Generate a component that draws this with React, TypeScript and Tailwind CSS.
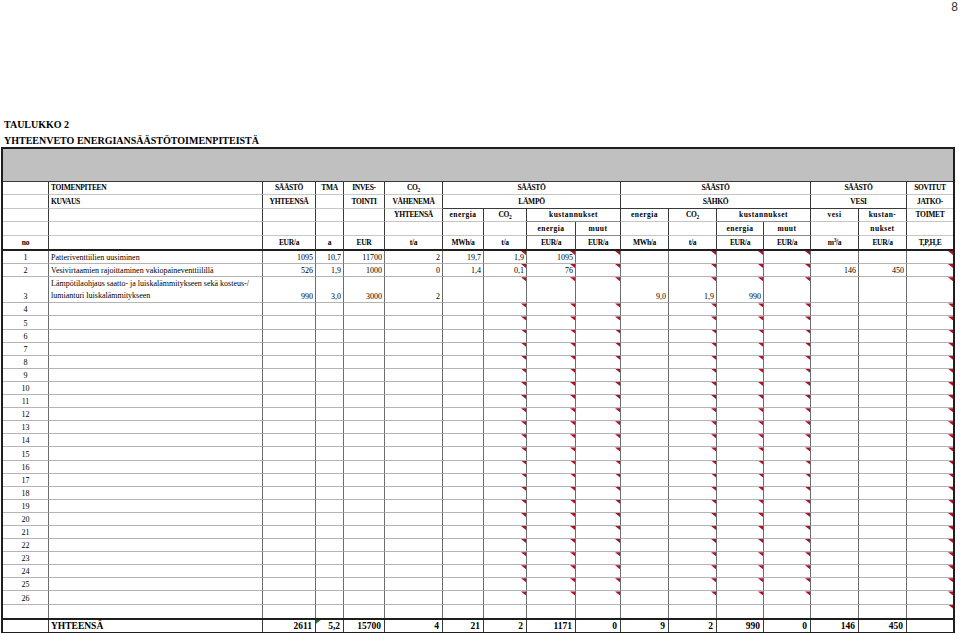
import type { ReactNode } from "react";

// 17 spreadsheet columns: no, kuvaus, säästö, tma, investointi, co2, lämpö x4, sähkö x4, vesi x2, sovitut
const COLS =
  "grid grid-cols-[46px_214px_53px_28px_41px_58px_41px_43px_49px_45px_48px_48px_47px_47px_48px_48px_46px]";

// columns that carry the red comment corner in every body row
const MARK = new Set([7, 8, 9, 11, 12, 13, 16]);

type HCell = {
  t?: ReactNode;
  span?: 2 | 4;
  r?: "d" | "n";
  b?: "l" | "d" | "m" | "x";
  left?: boolean;
  low?: boolean;
};

const co2 = (
  <span>
    CO<span className="text-[5.5px] relative top-[1.5px]">2</span>
  </span>
);

const m3 = (
  <span>
    m<span className="text-[5.5px] relative -top-[2.5px]">3</span>/a
  </span>
);

const rBorder = { d: "border-r border-r-[#3a3a3a]", n: "" };
const bBorder = {
  l: "border-b border-b-[#c6c6c6]",
  d: "border-b border-b-[#3a3a3a]",
  m: "border-b border-b-[#8a8a8a]",
  x: "border-b-2 border-b-[#1e1e1e]",
};

const e = (n: number, b: HCell["b"] = "l"): HCell[] => Array.from({ length: n }, () => ({ b }));

const header: HCell[] = [
  // row 1
  {},
  { t: "TOIMENPITEEN", left: true },
  { t: "SÄÄSTÖ" },
  { t: "TMA" },
  { t: "INVES-" },
  { t: co2 },
  { t: "SÄÄSTÖ", span: 4 },
  { t: "SÄÄSTÖ", span: 4 },
  { t: "SÄÄSTÖ", span: 2 },
  { t: "SOVITUT", r: "n" },
  // row 2
  {},
  { t: "KUVAUS", left: true },
  { t: "YHTEENSÄ" },
  {},
  { t: "TOINTI" },
  { t: "VÄHENEMÄ" },
  { t: "LÄMPÖ", span: 4, b: "d" },
  { t: "SÄHKÖ", span: 4, b: "d" },
  { t: "VESI", span: 2, b: "d" },
  { t: "JATKO-", r: "n" },
  // row 3
  ...e(5),
  { t: "YHTEENSÄ" },
  { t: "energia", low: true },
  { t: co2 },
  { t: "kustannukset", span: 2, b: "m", low: true },
  { t: "energia", low: true },
  { t: co2 },
  { t: "kustannukset", span: 2, b: "m", low: true },
  { t: "vesi", low: true },
  { t: "kustan-", low: true },
  { t: "TOIMET", r: "n" },
  // row 4
  ...e(8),
  { t: "energia", b: "m", low: true },
  { t: "muut", b: "m", low: true },
  ...e(2),
  { t: "energia", b: "m", low: true },
  { t: "muut", b: "m", low: true },
  {},
  { t: "nukset", low: true },
  { r: "n" },
  // row 5
  ...[
    "no",
    "",
    "EUR/a",
    "a",
    "EUR",
    "t/a",
    "MWh/a",
    "t/a",
    "EUR/a",
    "EUR/a",
    "MWh/a",
    "t/a",
    "EUR/a",
    "EUR/a",
  ].map((t): HCell => ({ t, b: "x" })),
  { t: m3, b: "x" },
  { t: "EUR/a", b: "x" },
  { t: "T,P,H,E", b: "x", r: "n" },
];

type Row = { no: string; text?: string[]; vals?: Record<number, string>; tall?: boolean };

const rows: Row[] = [
  {
    no: "1",
    text: ["Patteriventtiilien uusiminen"],
    vals: { 2: "1095", 3: "10,7", 4: "11700", 5: "2", 6: "19,7", 7: "1,9", 8: "1095" },
  },
  {
    no: "2",
    text: ["Vesivirtaamien rajoittaminen vakiopaineventtiilillä"],
    vals: { 2: "526", 3: "1,9", 4: "1000", 5: "0", 6: "1,4", 7: "0,1", 8: "76", 14: "146", 15: "450" },
  },
  {
    no: "3",
    tall: true,
    text: ["Lämpötilaohjaus saatto- ja luiskalämmitykseen sekä kosteus-/", "lumianturi luiskalämmitykseen"],
    vals: { 2: "990", 3: "3,0", 4: "3000", 5: "2", 10: "9,0", 11: "1,9", 12: "990" },
  },
  ...Array.from({ length: 23 }, (_, i) => ({ no: String(i + 4) })),
];

const totals = ["", "YHTEENSÄ", "2611", "5,2", "15700", "4", "21", "2", "1171", "0", "9", "2", "990", "0", "146", "450", ""];

function Corner({ green }: { green?: boolean }) {
  return green ? (
    <span className="absolute left-0 top-0 w-[5px] h-[4px] bg-[#1f7a2e] [clip-path:polygon(0_0,100%_0,0_100%)]" />
  ) : (
    <span className="absolute right-0 top-0 w-[5px] h-[4px] bg-[#b01028] [clip-path:polygon(0_0,100%_0,100%_100%)]" />
  );
}

function BodyRow({ row }: { row: Row }) {
  return (
    <div className={`${COLS} ${row.tall ? "h-[26.2px]" : "h-[13.1px]"}`}>
      {Array.from({ length: 17 }, (_, i) => {
        const align = i === 0 ? "justify-center" : i === 1 ? "justify-start pl-[2px]" : "justify-end pr-[2px]";
        const content = i === 0 ? row.no : i === 1 ? row.text : row.vals?.[i];
        return (
          <div
            key={i}
            className={`relative flex items-end ${align} border-b border-b-[#b4b4b4] ${
              i < 16 ? "border-r border-r-[#6c6c6c]" : ""
            } text-[8px] leading-[11px] whitespace-nowrap overflow-visible`}
          >
            {MARK.has(i) && <Corner />}
            {Array.isArray(content) ? (
              <div className={row.tall ? "leading-[12px]" : ""}>
                {content.map((l) => (
                  <div key={l}>{l}</div>
                ))}
              </div>
            ) : (
              content
            )}
          </div>
        );
      })}
    </div>
  );
}

export default function App() {
  return (
    <div className="w-[960px] h-[633px] bg-white text-black overflow-hidden font-['Liberation_Serif','Times_New_Roman',serif]">
      <div className="flex justify-end pr-[2px] h-[14px] pt-[1px] text-[12px] leading-[12px] text-[#333] font-['Liberation_Sans',Arial,sans-serif]">
        8
      </div>

      <div className="mt-[103px] pl-[4px] text-[10px] font-bold leading-[16px]">TAULUKKO 2</div>
      <div className="mt-[2px] pl-[4px] text-[10px] font-bold leading-[12px]">
        YHTEENVETO ENERGIANSÄÄSTÖTOIMENPITEISTÄ
      </div>

      <div className="ml-[1px] w-[954px] border-2 border-[#1e1e1e]">
        <div className="h-[33px] bg-[#c0c0c0] border-b border-b-[#3a3a3a]" />

        <div className={`${COLS} grid-rows-[13px_14px_13px_14px_15px]`}>
          {header.map((c, i) => (
            <div
              key={i}
              className={`flex items-center ${c.left ? "justify-start pl-[2px]" : "justify-center"} ${
                c.span === 4 ? "col-span-4" : c.span === 2 ? "col-span-2" : ""
              } ${rBorder[c.r ?? "d"]} ${bBorder[c.b ?? "l"]} font-bold whitespace-nowrap ${
                c.low ? "text-[7.5px] tracking-[0.5px]" : "text-[7.5px] tracking-[-0.3px]"
              }`}
            >
              {c.t}
            </div>
          ))}
        </div>

        {rows.map((r) => (
          <BodyRow key={r.no} row={r} />
        ))}

        <div className={`${COLS} h-[13.1px]`}>
          {Array.from({ length: 17 }, (_, i) => (
            <div key={i} className={`relative ${i < 16 ? "border-r border-r-[#6c6c6c]" : ""}`}>
              {i === 16 && <Corner />}
            </div>
          ))}
        </div>

        <div className={`${COLS} h-[14px] border-t-2 border-t-[#1e1e1e]`}>
          {totals.map((t, i) => (
            <div
              key={i}
              className={`relative flex items-center ${
                i === 1 ? "justify-start pl-[2px]" : "justify-end pr-[3px]"
              } ${i < 16 ? "border-r border-r-[#3a3a3a]" : ""} text-[9.5px] leading-[12px] font-bold`}
            >
              {i === 3 && <Corner green />}
              {t}
            </div>
          ))}
        </div>
      </div>
    </div>
  );
}
